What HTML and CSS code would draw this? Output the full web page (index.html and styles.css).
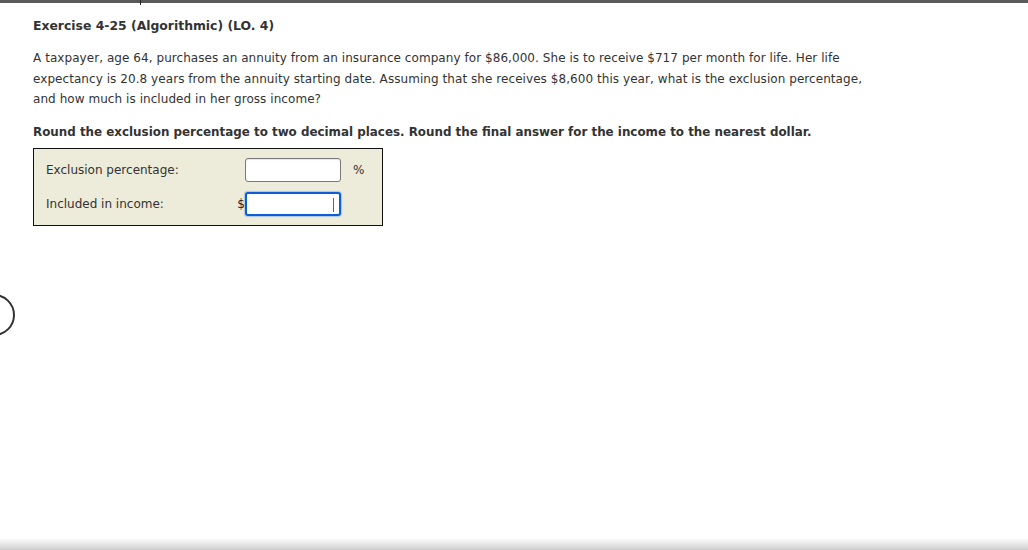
FILE: index.html
```html
<!DOCTYPE html>
<html lang="en">
<head>
<meta charset="utf-8">
<title>Exercise 4-25</title>
<link rel="stylesheet" href="styles.css">
</head>
<body>
<div class="page">
  <div class="topbar"><span class="tick"></span></div>
  <main class="content">
    <h1 class="title">Exercise 4-25 (Algorithmic) (LO. 4)</h1>
    <p class="question">A taxpayer, age 64, purchases an annuity from an insurance company for $86,000. She is to receive $717 per month for life. Her life expectancy is 20.8 years from the annuity starting date. Assuming that she receives $8,600 this year, what is the exclusion percentage, and how much is included in her gross income?</p>
    <p class="instruction">Round the exclusion percentage to two decimal places. Round the final answer for the income to the nearest dollar.</p>
    <div class="answer-box">
      <div class="label">Exclusion percentage:</div>
      <div class="prefix"></div>
      <div class="field"></div>
      <div class="unit">%</div>
      <div class="label">Included in income:</div>
      <div class="prefix">$</div>
      <div class="field focused"><span class="caret"></span></div>
      <div class="unit"></div>
    </div>
  </main>
  <div class="bottom-shadow"></div>
  <div class="side-circle"></div>
</div>
</body>
</html>
```
FILE: styles.css
```css
* { box-sizing: border-box; }
html, body { margin: 0; padding: 0; background: #ffffff; }
body {
  font-family: "DejaVu Sans", Verdana, sans-serif;
  color: #333333;
  overflow: hidden;
}
.page {
  position: relative;
  height: 550px;
  display: flex;
  flex-direction: column;
  overflow: hidden;
}
.topbar {
  position: relative;
  height: 3px;
  background: #5a5a5a;
  flex: none;
}
.tick {
  position: absolute;
  left: 140px;
  top: 0;
  width: 1px;
  height: 5px;
  background: #222;
}
.content {
  flex: 1;
  padding: 0 33px;
}
.title {
  margin: 15px 0 0;
  font-size: 12.4px;
  font-weight: bold;
  line-height: 16px;
  color: #333;
}
.question {
  margin: 14px 0 0;
  font-size: 12px;
  letter-spacing: 0.06px;
  line-height: 20.5px;
  max-width: 840px;
}
.instruction {
  margin: 14px 0 0;
  font-size: 11.9px;
  font-weight: bold;
  line-height: 16px;
}
.answer-box {
  margin-top: 8px;
  width: 350px;
  border: 1px solid #111;
  background: #edebda;
  padding: 9px 0 9px 12px;
  display: grid;
  grid-template-columns: 190px 9px 96px 40px;
  row-gap: 10px;
  align-items: center;
  font-size: 12px;
}
.label { line-height: 16px; }
.prefix { text-align: right; color: #222; }
.unit { padding-left: 12px; }
.field {
  position: relative;
  height: 24px;
  background: #fff;
  border: 1px solid #7a7a7a;
  border-radius: 3px;
  box-shadow: inset 0 1px 1px rgba(0,0,0,0.1);
}
.field.focused {
  border: 2px solid #0b5ed8;
  box-shadow: 0 0 1px 1px rgba(60,130,230,0.35);
}
.caret {
  position: absolute;
  right: 5px;
  top: 4px;
  width: 1px;
  height: 14px;
  background: #1a73e8;
}
.bottom-shadow {
  flex: none;
  height: 12px;
  background: linear-gradient(to bottom, rgba(255,255,255,0), #d6d6d6 85%, #c8c8c8);
}
.side-circle {
  position: absolute;
  left: -27px;
  top: 294px;
  width: 42px;
  height: 42px;
  border: 2.5px solid #333;
  border-radius: 50%;
}
```
